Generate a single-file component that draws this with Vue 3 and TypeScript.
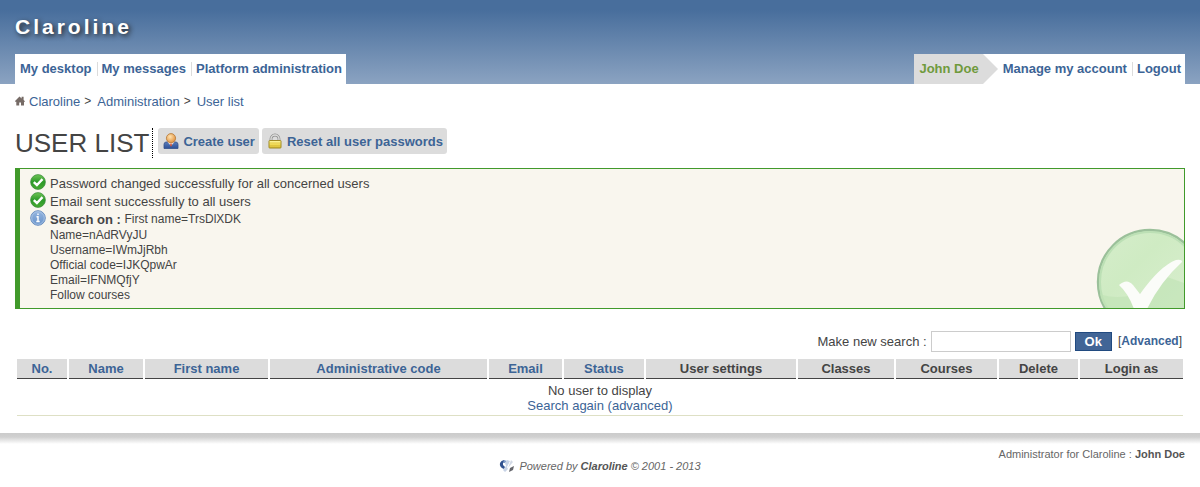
<script setup lang="ts">
import { ref } from 'vue'

interface Column {
  label: string
  sortable: boolean
  width: number
}

const desktopLinks: string[] = ['My desktop', 'My messages', 'Platform administration']
const trail: string[] = ['Claroline', 'Administration', 'User list']
const notices: string[] = [
  'Password changed successfully for all concerned users',
  'Email sent successfully to all users',
]
const criteria: string[] = [
  'First name=TrsDlXDK',
  'Name=nAdRVyJU',
  'Username=IWmJjRbh',
  'Official code=IJKQpwAr',
  'Email=IFNMQfjY',
  'Follow courses',
]
const columns: Column[] = [
  { label: 'No.', sortable: true, width: 50 },
  { label: 'Name', sortable: true, width: 74 },
  { label: 'First name', sortable: true, width: 123 },
  { label: 'Administrative code', sortable: true, width: 217 },
  { label: 'Email', sortable: true, width: 73 },
  { label: 'Status', sortable: true, width: 80 },
  { label: 'User settings', sortable: false, width: 150 },
  { label: 'Classes', sortable: false, width: 96 },
  { label: 'Courses', sortable: false, width: 101 },
  { label: 'Delete', sortable: false, width: 79 },
  { label: 'Login as', sortable: false, width: 103 },
]
const totalWidth = columns.reduce((sum, c) => sum + c.width, 0)
const query = ref('')
</script>

<template>
  <div class="page">
    <header class="banner">
      <a class="brand" href="#">Claroline</a>
      <div class="bars">
        <nav class="bar" aria-label="Platform">
          <a v-for="link in desktopLinks" :key="link" href="#">{{ link }}</a>
        </nav>
        <nav class="bar" aria-label="Account">
          <span class="user">John Doe</span>
          <svg class="arrow" viewBox="0 0 15 30" aria-hidden="true"><path d="M0 0 15 15 0 30Z" fill="#dcdcdc" /></svg>
          <a href="#">Manage my account</a>
          <a href="#">Logout</a>
        </nav>
      </div>
    </header>

    <nav class="trail" aria-label="Breadcrumb">
      <svg class="home" viewBox="0 0 10 12" aria-hidden="true">
        <path d="M0 5 4.5 0.6 6.6 2.4V0.8H8.6V4L10 5.2 9.3 6 9 5.8V9.5H6V6.5H4.2V9.5H1.3V5.8L0.6 6Z" fill="#766b66" />
      </svg>
      <template v-for="(step, i) in trail" :key="step">
        <a href="#">{{ step }}</a><span v-if="i < trail.length - 1" class="sep">&gt;</span>
      </template>
    </nav>

    <main>
      <div class="heading">
        <h1>USER LIST</h1>
        <div class="tools">
          <a class="tool" href="#">
            <svg viewBox="0 0 16 16" aria-hidden="true">
              <defs>
                <radialGradient id="face" cx=".4" cy=".35" r=".65"><stop offset="0" stop-color="#ffe3b0" /><stop offset="1" stop-color="#e29342" /></radialGradient>
                <linearGradient id="coat" x1="0" y1="0" x2="0" y2="1"><stop offset="0" stop-color="#5b7cba" /><stop offset="1" stop-color="#2c5098" /></linearGradient>
              </defs>
              <path d="M1 15.5V11.5Q1 9.3 3 9H13Q15 9.3 15 11.5V15.5Z" fill="url(#coat)" stroke="#34508a" stroke-width=".8" />
              <path d="M4.5 9 8 13 11.5 9Z" fill="#f3dfd7" />
              <path d="M8 10 9 12 8 14 7 12Z" fill="#c64a32" />
              <circle cx="8" cy="5.2" r="4.6" fill="url(#face)" stroke="#b47838" stroke-width=".8" />
            </svg>
            Create user
          </a>
          <a class="tool" href="#">
            <svg viewBox="0 0 16 16" aria-hidden="true">
              <defs><linearGradient id="brass" x1="0" y1="0" x2="0" y2="1"><stop offset="0" stop-color="#fff9a6" /><stop offset=".5" stop-color="#f2de58" /><stop offset="1" stop-color="#d6b932" /></linearGradient></defs>
              <path d="M4 8V6A4 4 0 0 1 12 6V8" fill="none" stroke="#8e8e8e" stroke-width="2.8" />
              <path d="M4 8V6A4 4 0 0 1 12 6V8" fill="none" stroke="#dededc" stroke-width="1.4" />
              <rect x="2" y="7.5" width="12" height="7.5" rx=".6" fill="url(#brass)" stroke="#a08a24" />
              <path d="M3 10H13M3 12.5H13" stroke="#dcbd39" stroke-width=".6" />
            </svg>
            Reset all user passwords
          </a>
        </div>
      </div>

      <section class="dialog" role="status">
        <svg class="seal" viewBox="0 0 88 80" aria-hidden="true">
          <defs><linearGradient id="pale" x1="0" y1="0" x2="1" y2="1"><stop offset="0" stop-color="#d5edcb" /><stop offset=".35" stop-color="#cfebc3" /><stop offset=".7" stop-color="#d6edcb" /></linearGradient></defs>
          <circle cx="54" cy="54" r="52" fill="url(#pale)" stroke="#9bc09a" stroke-width="2.4" />
          <circle cx="54" cy="54" r="50" fill="none" stroke="#bce0b5" stroke-width="2" />
          <path d="M4 66Q20 72 42 66 62 58 71 49L88 55V80H10Q5 73 4 66Z" fill="#c0e4b5" opacity=".65" />
          <path d="M23 57Q31 50 37 57L44 66Q64 38 80 32Q86 31 86 34Q64 54 51 81H38Q32 65 23 57Z" fill="#fbfcf9" />
        </svg>
        <p v-for="notice in notices" :key="notice" class="notice">
          <svg viewBox="0 0 16 16" aria-hidden="true">
            <defs><linearGradient id="leaf" x1="0" y1="0" x2="0" y2="1"><stop offset="0" stop-color="#70c455" /><stop offset=".5" stop-color="#2c9a29" /><stop offset="1" stop-color="#48ab32" /></linearGradient></defs>
            <circle cx="8" cy="8" r="7.4" fill="url(#leaf)" stroke="#3a8a3c" stroke-width=".7" />
            <path d="M3.8 8.2 6.9 11 12.5 5.2" fill="none" stroke="#fff" stroke-width="2.4" />
          </svg>
          {{ notice }}
        </p>
        <div class="notice">
          <svg viewBox="0 0 16 16" aria-hidden="true">
            <defs><linearGradient id="sky" x1="0" y1="0" x2="0" y2="1"><stop offset="0" stop-color="#96b6df" /><stop offset="1" stop-color="#6792ca" /></linearGradient></defs>
            <circle cx="8" cy="8" r="7.3" fill="url(#sky)" stroke="#6d91c1" />
            <circle cx="8" cy="8" r="6.3" fill="none" stroke="#b6cdea" stroke-width=".7" />
            <path d="M8 3.5V5M6.5 6.8H8V11M6.3 11.5H9.7" fill="none" stroke="#fff" stroke-width="1.4" />
          </svg>
          <strong>Search on :</strong>&nbsp;<small>{{ criteria[0] }}</small>
        </div>
        <ul class="criteria">
          <li v-for="item in criteria.slice(1)" :key="item">{{ item }}</li>
        </ul>
      </section>

      <form class="search" @submit.prevent>
        <label for="search">Make new search :</label>
        <input id="search" v-model="query" type="text">
        <button type="submit">Ok</button>
        <small>[<a href="#">Advanced</a>]</small>
      </form>

      <table>
        <colgroup>
          <col v-for="c in columns" :key="c.label" :style="{ width: (c.width / totalWidth) * 100 + '%' }">
        </colgroup>
        <thead>
          <tr>
            <th v-for="c in columns" :key="c.label" scope="col">
              <a v-if="c.sortable" href="#">{{ c.label }}</a>
              <template v-else>{{ c.label }}</template>
            </th>
          </tr>
        </thead>
        <tbody>
          <tr>
            <td :colspan="columns.length">No user to display<br><a href="#">Search again (advanced)</a></td>
          </tr>
        </tbody>
      </table>
    </main>

    <footer>
      <div class="powered">
        <svg viewBox="0 0 16 14" aria-hidden="true">
          <path d="M5 1A5 5 0 0 0 1 4Q0 8 5 10L6 8 4 6 4 4 6 3Z" fill="#31528f" />
          <path d="M5 1 8 2 6 4 4 4Z" fill="#7f9bc7" />
          <path d="M8 1 11 2 8 8 9 10 6 13 4 11 7 7 6 4Z" fill="#c6d2e5" />
          <path d="M12 1 14 3 9 9Z" fill="#d3dae6" />
          <path d="M15 7 14 11 10 13 11 9Z" fill="#65666c" />
        </svg>
        <em>Powered by <a href="#">Claroline</a> © 2001 - 2013</em>
      </div>
      <div class="admin">Administrator for Claroline : <a href="#">John Doe</a></div>
    </footer>
  </div>
</template>

<style>
body {
  margin: 0;
  background: #fff;
}
</style>

<style scoped>
.page {
  font: 13px/15px "Liberation Sans", Arial, sans-serif;
  color: #444;
}
a {
  color: #3c6496;
  text-decoration: none;
}
.banner {
  display: flex;
  flex-direction: column;
  gap: 15px;
  padding: 15px 15px 0;
  background: linear-gradient(#486e9c, #486e9c 12%, #8ba3c1);
}
.brand {
  align-self: flex-start;
  color: #fff;
  font-size: 21px;
  font-weight: bold;
  line-height: 24px;
  letter-spacing: 3px;
  text-shadow: 2px 2px 5px #222;
}
.bars {
  display: flex;
  justify-content: space-between;
}
.bar {
  display: flex;
  align-items: center;
  height: 30px;
  background: #fff;
  font-weight: bold;
}
.bar a {
  padding: 0 5px;
  line-height: 14px;
}
.bar a + a {
  border-left: 1px solid #dcdcdc;
  padding-left: 4px;
}
.bar a:last-child {
  padding-right: 4px;
}
.user {
  padding: 0 4px 0 5px;
  background: #dcdcdc;
  color: #6f9a3c;
  line-height: 30px;
}
.arrow {
  width: 15px;
  height: 30px;
}
.trail {
  display: flex;
  align-items: center;
  padding: 10px 15px;
}
.home {
  width: 10px;
  height: 12px;
  margin-right: 4px;
}
.sep {
  margin: 0 6px 0 4px;
  font-size: 12px;
}
main {
  padding: 0 15px;
}
.heading {
  display: flex;
  align-items: flex-start;
  gap: 5px;
  padding: 9px 0 10px;
}
h1 {
  margin: 0;
  padding-right: 3px;
  border-right: 1px dotted #000;
  font-size: 26px;
  font-weight: normal;
  line-height: 30px;
}
.tools {
  display: flex;
  gap: 3px;
}
.tool {
  display: flex;
  align-items: center;
  gap: 4px;
  height: 26px;
  padding: 0 4px 0 5px;
  border-radius: 3px;
  background: #dcdcdc;
  font-weight: bold;
}
.tool svg {
  width: 16px;
  height: 16px;
}
.dialog {
  position: relative;
  padding: 5px 10px;
  border: 1px solid #419a2b;
  border-left-width: 5px;
  background: #f9f6ee;
}
.seal {
  position: absolute;
  right: 0;
  bottom: 0;
  width: 88px;
  height: 80px;
}
.notice {
  display: flex;
  align-items: center;
  height: 18px;
  margin: 0;
}
.notice svg {
  align-self: flex-start;
  width: 16px;
  height: 16px;
  margin-right: 4px;
}
small,
.criteria {
  font-size: 12px;
}
.criteria {
  margin: 0;
  padding: 0 0 0 20px;
  list-style: none;
}
.search {
  display: flex;
  align-items: center;
  justify-content: flex-end;
  gap: 4px;
  padding: 22px 3px 5px 0;
}
.search input {
  box-sizing: border-box;
  width: 140px;
  height: 21px;
  border: 1px solid #ccc;
  background: #fff;
  font: inherit;
}
.search button {
  height: 19px;
  padding: 0 9px;
  border: 1px solid #214a80;
  background: #416596;
  color: #fff;
  font: bold 13px/15px "Liberation Sans", Arial, sans-serif;
}
.search small {
  margin-left: 2px;
}
.search small a {
  font-weight: bold;
}
table {
  width: 100%;
  table-layout: fixed;
  border-spacing: 2px;
}
th {
  padding: 2px 0;
  border-bottom: 1px solid #444;
  background: #dcdcdc;
}
td {
  padding: 2px 0;
  border-bottom: 1px solid #dee0c5;
  text-align: center;
}
footer {
  display: grid;
  grid-template-columns: 1fr auto 1fr;
  margin-top: 15px;
  padding: 14px 15px;
  background: linear-gradient(#cbcbcb, #d0d0d0 4px, #fff 11px);
  color: #666;
  font-size: 11px;
  line-height: 14px;
}
footer a {
  color: #555;
  font-weight: bold;
}
.powered {
  display: flex;
  grid-column: 2;
  align-items: center;
  gap: 4px;
  padding-top: 12px;
}
.powered svg {
  width: 16px;
  height: 14px;
}
.admin {
  justify-self: end;
}
</style>
